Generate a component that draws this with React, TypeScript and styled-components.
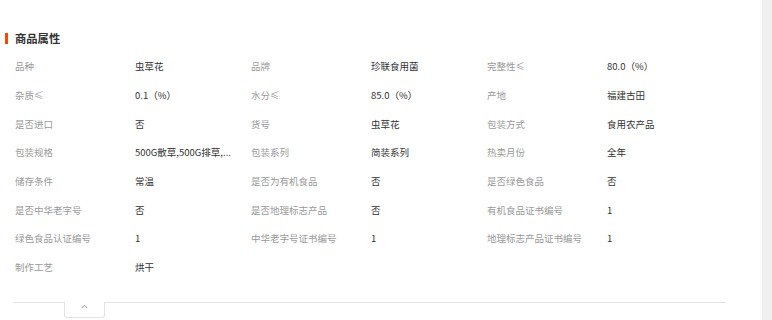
import styled, { createGlobalStyle } from 'styled-components';

const GlobalStyle = createGlobalStyle`
  html, body {
    margin: 0;
    padding: 0;
    background: #ffffff;
  }
  body {
    font-family: "Noto Sans CJK SC", "Liberation Sans", sans-serif;
  }
`;

const PageWrapper = styled.div`
  display: flex;
  width: 772px;
  height: 320px;
  overflow: hidden;
`;

const MainPanel = styled.div`
  width: 762px;
  padding-top: 29px;
  background-color: #ffffff;
`;

const SideStrip = styled.div`
  width: 10px;
  background-color: #f0f0f0;
`;

const TitleRow = styled.div`
  display: flex;
  align-items: center;
  height: 18px;
  padding-left: 5px;
  gap: 7px;
  margin-bottom: 5px;
`;

const TitleMark = styled.span`
  width: 3px;
  height: 11px;
  background-color: #ff4400;
`;

const Title = styled.span`
  font-size: 11.3px;
  font-weight: 700;
  color: #333333;
`;

const AttrGrid = styled.div`
  display: grid;
  grid-template-columns: repeat(3, 120px 116px);
  grid-auto-rows: 28.7px;
  padding-left: 15px;
  align-items: center;
`;

const Label = styled.span`
  font-size: 9.5px;
  color: #9a9a9a;
  white-space: nowrap;
`;

const Value = styled.span`
  font-size: 9.5px;
  color: #333333;
  white-space: nowrap;
  overflow: hidden;
  max-width: 110px;
`;

const Footer = styled.div`
  margin: 20px 36px 0 14px;
  border-top: 1px solid #e3e3e3;
  display: flex;
`;

const ToggleTab = styled.div`
  margin: -1px 0 0 50px;
  width: 39px;
  height: 13px;
  background: #ffffff;
  border: 1px solid #e3e3e3;
  border-top: none;
  border-radius: 0 0 3px 3px;
  display: flex;
  justify-content: center;
  padding-top: 2px;
`;

const attributes: [string, string][] = [
  ['品种', '虫草花'],
  ['品牌', '珍联食用菌'],
  ['完整性≤', '80.0（%）'],
  ['杂质≤', '0.1（%）'],
  ['水分≤', '85.0（%）'],
  ['产地', '福建古田'],
  ['是否进口', '否'],
  ['货号', '虫草花'],
  ['包装方式', '食用农产品'],
  ['包装规格', '500G散草,500G排草,500G礼盒'],
  ['包装系列', '简装系列'],
  ['热卖月份', '全年'],
  ['储存条件', '常温'],
  ['是否为有机食品', '否'],
  ['是否绿色食品', '否'],
  ['是否中华老字号', '否'],
  ['是否地理标志产品', '否'],
  ['有机食品证书编号', '1'],
  ['绿色食品认证编号', '1'],
  ['中华老字号证书编号', '1'],
  ['地理标志产品证书编号', '1'],
  ['制作工艺', '烘干'],
];

// long values are cut short like the shop page does
const shorten = (text: string, max = 14) =>
  text.length > max ? `${text.slice(0, max)}...` : text;

const App = () => {
  return (
    <PageWrapper>
      <GlobalStyle />
      <MainPanel>
        <TitleRow>
          <TitleMark />
          <Title>商品属性</Title>
        </TitleRow>
        <AttrGrid>
          {attributes.map(([label, value], index) => [
            <Label key={`l${index}`}>{label}</Label>,
            <Value key={`v${index}`} title={value}>
              {shorten(value)}
            </Value>,
          ])}
        </AttrGrid>
        <Footer>
          <ToggleTab>
            <svg width="7" height="5" viewBox="0 0 7 5">
              <path d="M0.8 4 L3.5 1.2 L6.2 4" fill="none" stroke="#999" strokeWidth="1" />
            </svg>
          </ToggleTab>
        </Footer>
      </MainPanel>
      <SideStrip />
    </PageWrapper>
  );
};

export default App;
